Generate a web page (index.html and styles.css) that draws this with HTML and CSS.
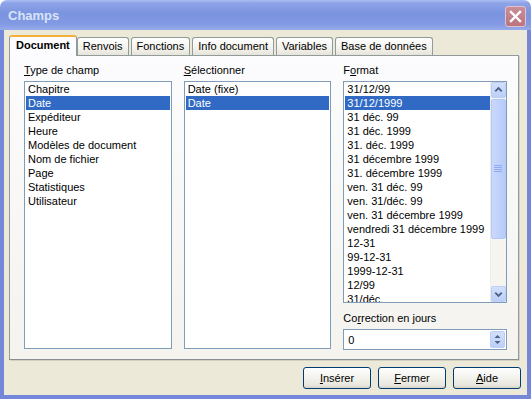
FILE: index.html
```html
<!DOCTYPE html>
<html lang="fr">
<head>
    <meta charset="UTF-8">
    <title>Champs</title>
    <link rel="stylesheet" href="styles.css">
</head>
<body>
<div class="window">
    <div class="titlebar">
        <span class="title">Champs</span>
        <span class="close">
            <svg width="21" height="21" viewBox="0 0 21 21"><path d="M6 6 L15 15 M15 6 L6 15" stroke="#fff" stroke-width="2.4" stroke-linecap="square"/></svg>
        </span>
    </div>
    <div class="client">
        <div class="tabs">
            <div class="tab active">Document</div>
            <div class="tab">Renvois</div>
            <div class="tab">Fonctions</div>
            <div class="tab">Info document</div>
            <div class="tab">Variables</div>
            <div class="tab">Base de données</div>
        </div>

        <div class="panel">
            <div class="column">
                <div class="label"><u>T</u>ype de champ</div>
                <ul class="listbox tall">
                    <li>Chapitre</li>
                    <li class="selected">Date</li>
                    <li>Expéditeur</li>
                    <li>Heure</li>
                    <li>Modèles de document</li>
                    <li>Nom de fichier</li>
                    <li>Page</li>
                    <li>Statistiques</li>
                    <li>Utilisateur</li>
                </ul>
            </div>

            <div class="column">
                <div class="label"><u>S</u>électionner</div>
                <ul class="listbox tall">
                    <li>Date (fixe)</li>
                    <li class="selected">Date</li>
                </ul>
            </div>

            <div class="column wide">
                <div class="label">F<u>o</u>rmat</div>
                <div class="listbox format">
                    <ul class="items">
                        <li>31/12/99</li>
                        <li class="selected">31/12/1999</li>
                        <li>31 déc. 99</li>
                        <li>31 déc. 1999</li>
                        <li>31. déc. 1999</li>
                        <li>31 décembre 1999</li>
                        <li>31. décembre 1999</li>
                        <li>ven. 31 déc. 99</li>
                        <li>ven. 31/déc. 99</li>
                        <li>ven. 31 décembre 1999</li>
                        <li>vendredi 31 décembre 1999</li>
                        <li>12-31</li>
                        <li>99-12-31</li>
                        <li>1999-12-31</li>
                        <li>12/99</li>
                        <li>31/déc.</li>
                    </ul>
                    <div class="scrollbar">
                        <div class="sb-btn">
                            <svg width="14" height="14" viewBox="0 0 14 14"><path d="M3.5 8.5 L7 5 L10.5 8.5" fill="none" stroke="#4d6185" stroke-width="2"/></svg>
                        </div>
                        <div class="sb-thumb">
                            <svg width="8" height="8" viewBox="0 0 8 8"><path d="M0 .5 H8 M0 2.5 H8 M0 4.5 H8 M0 6.5 H8" stroke="#8faaf0" stroke-width="1"/></svg>
                        </div>
                        <div class="sb-track"></div>
                        <div class="sb-btn">
                            <svg width="14" height="14" viewBox="0 0 14 14"><path d="M3.5 5.5 L7 9 L10.5 5.5" fill="none" stroke="#4d6185" stroke-width="2"/></svg>
                        </div>
                    </div>
                </div>
                <div class="label spaced">Co<u>r</u>rection en jours</div>
                <div class="spinbox">
                    <span class="value">0</span>
                    <span class="spin">
                        <svg width="13" height="15" viewBox="0 0 13 15"><path d="M3.5 6 L6.5 3 L9.5 6 Z M3.5 9 L6.5 12 L9.5 9 Z" fill="#4d6185"/></svg>
                    </span>
                </div>
            </div>
        </div>

        <div class="actions">
            <button class="btn"><u>I</u>nsérer</button>
            <button class="btn"><u>F</u>ermer</button>
            <button class="btn"><u>A</u>ide</button>
        </div>
    </div>
</div>
</body>
</html>
```

FILE: styles.css
```css
* {
    box-sizing: border-box;
}

body {
    margin: 0;
    background: #fff;
    font-family: "Liberation Sans", Arial, sans-serif;
    font-size: 11px;
    color: #000;
}

.window {
    width: 531px;
    height: 399px;
    display: flex;
    flex-direction: column;
}

/* title bar (inactive XP look) */
.titlebar {
    height: 30px;
    display: flex;
    align-items: center;
    padding: 0 5px 0 8px;
    border-radius: 7px 7px 0 0;
    background: linear-gradient(#abbef2 0, #8ea4e8 3px, #7b94e0 45%, #8299e3 80%, #96abeb 100%);
}

.title {
    flex: 1;
    color: #d8e4f8;
    font-weight: bold;
    font-size: 13px;
    padding-top: 1px;
}

.close {
    width: 21px;
    height: 21px;
    display: flex;
    border: 1px solid #e3c3cb;
    border-radius: 3px;
    background: linear-gradient(#c98f9a, #b9737f);
    margin-top: 2px;
}

.close svg {
    margin: -1px;
}

.client {
    flex: 1;
    background: #ece9d8;
    border: 4px solid #7487d9;
    border-top: 0;
    padding: 5px 6px 0 5px;
}

/* tabs */
.tabs {
    display: flex;
    align-items: flex-end;
    height: 20px;
    position: relative;
    z-index: 1;
}

.tab {
    height: 18px;
    line-height: 16px;
    padding: 0 5px;
    margin-left: 2px;
    border: 1px solid #919b9c;
    border-bottom: 0;
    border-radius: 3px 3px 0 0;
    background: linear-gradient(#fff, #f3f2ed 60%, #e6e4d9);
    white-space: nowrap;
}

.tab.active {
    height: 21px;
    margin: 0 -1px -1px 0;
    padding: 0 6px;
    font-weight: bold;
    line-height: 17px;
    border-top: 2px solid #f2b13a;
    background: #fcfcfe;
}

.tab.active + .tab {
    margin-left: 1px;
}

.panel {
    height: 305px;
    margin-right: 2px;
    display: flex;
    column-gap: 12px;
    padding: 7px 11px 0 14px;
    border: 1px solid #919b9c;
    border-bottom-color: #8a9091;
    background: linear-gradient(#fcfcfe, #f4f3ee);
    box-shadow: 1px 1px 0 #d3d0c2;
}

.column {
    width: 148px;
    display: flex;
    flex-direction: column;
}

.column.wide {
    width: 164px;
}

.label {
    line-height: 14px;
    margin-bottom: 4px;
    white-space: nowrap;
}

.label.spaced {
    margin-top: 8px;
}

.listbox {
    margin: 0;
    padding: 0 1px;
    list-style: none;
    background: #fff;
    border: 1px solid #7f9db9;
    overflow: hidden;
}

.listbox.tall {
    height: 268px;
}

.listbox li {
    height: 14px;
    line-height: 14px;
    padding-left: 2px;
    white-space: nowrap;
}

.listbox li.selected {
    background: #316ac5;
    color: #fff;
}

/* format list with its scrollbar */
.listbox.format {
    height: 222px;
    display: flex;
    padding: 0 0 0 1px;
}

.items {
    flex: 1;
    margin: 0;
    padding: 0;
    list-style: none;
    overflow: hidden;
}

.scrollbar {
    width: 16px;
    display: flex;
    flex-direction: column;
    background: #f5f4ef;
    border-left: 1px solid #eeede5;
}

.sb-btn {
    height: 16px;
    display: flex;
    align-items: center;
    justify-content: center;
    border: 1px solid #bccdf7;
    border-radius: 2px;
    background: linear-gradient(#d3e0fd, #bccff9);
}

.sb-thumb {
    height: 140px;
    margin-top: 1px;
    display: flex;
    align-items: center;
    justify-content: center;
    border: 1px solid #b3c8f6;
    border-radius: 2px;
    background: linear-gradient(90deg, #c9d8fc, #c0d2fb 50%, #b7cbf8);
}

.sb-track {
    flex: 1;
}

.spinbox {
    height: 21px;
    display: flex;
    align-items: center;
    background: #fff;
    border: 1px solid #7f9db9;
}

.spinbox .value {
    flex: 1;
    padding-left: 4px;
}

.spin {
    width: 15px;
    height: 17px;
    margin-right: 1px;
    display: flex;
    align-items: center;
    justify-content: center;
    border: 1px solid #bccdf7;
    border-radius: 2px;
    background: linear-gradient(#d3e0fd, #bccff9);
}

/* bottom buttons */
.actions {
    display: flex;
    justify-content: flex-end;
    gap: 7px;
    margin-top: 7px;
}

.btn {
    width: 68px;
    height: 22px;
    font-family: inherit;
    font-size: 11px;
    color: #000;
    border: 1px solid #003c74;
    border-radius: 3px;
    background: linear-gradient(#fff, #f3f2ed 50%, #e9e7de 85%, #d8d2c6);
    padding: 0;
}
```
